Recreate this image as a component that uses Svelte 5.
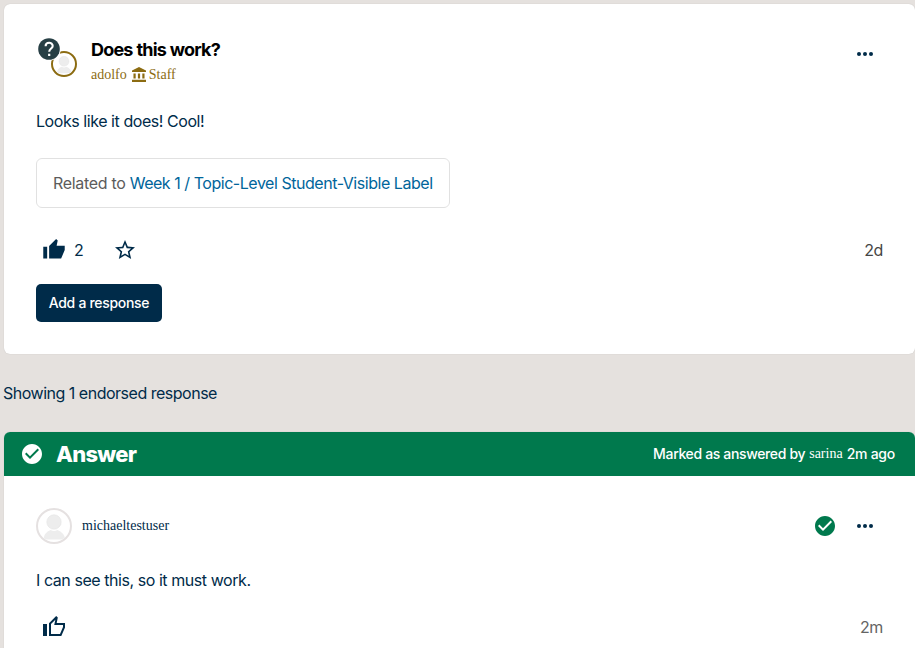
<script>
  const dots = [5, 11, 17];
</script>

{#snippet more()}
  <svg class="more" viewBox="0 0 22 8" width="22" height="8">
    {#each dots as x}<circle cx={x} cy="4" r="2" fill="currentColor" />{/each}
  </svg>
{/snippet}

{#snippet person()}
  <svg viewBox="0 0 32 32"><circle cx="16" cy="12" r="7.2" fill="#ededed" stroke="#e4e4e4" stroke-width=".6" /><path d="M5.500 29.500Q6 22.500 12.500 20Q16 22 19.500 20Q26 22.500 27.500 29.500Z" fill="#ededed" /></svg>
{/snippet}

{#snippet check(size)}
  <svg width={size} height={size} viewBox="2 2 20 20"><path fill="currentColor" d="M12 2C6.48 2 2 6.48 2 12s4.48 10 10 10 10-4.48 10-10S17.52 2 12 2zm-2 15-5-5 1.41-1.41L10 14.17l7.59-7.59L19 8l-9 9z" /></svg>
{/snippet}

<main>
  <article class="card post">
    <header>
      <div class="icons">
        <span class="avatar small">{@render person()}</span>
        <svg class="question" viewBox="0 0 24 24" width="24" height="24">
          <circle cx="12" cy="12" r="11.8" fill="#fff" />
          <circle cx="12" cy="12" r="10.8" fill="#273f45" />
          <path d="M8.600 9.300C8.600 4.600 15.700 4.800 15.700 9C15.700 11.500 12.200 11.600 12.200 14.800" fill="none" stroke="#fff" stroke-width="2.100" />
          <path d="M11.100 16.700h2.200v2.200h-2.200z" fill="#fff" />
        </svg>
      </div>
      <div class="heading">
        <h1>Does this work?</h1>
        <div class="author">
          <span class="name">adolfo</span>
          <svg width="14" height="15" viewBox="2 1 19 21" preserveAspectRatio="none"><path fill="currentColor" d="M4 10v7h3v-7H4zm6 0v7h3v-7h-3zM2 22h19v-3H2v3zm14-12v7h3v-7h-3zm-4.500-9L2 6v2h19V6l-9.500-5z" /></svg>
          <span class="role">Staff</span>
        </div>
      </div>
      {@render more()}
    </header>
    <p class="body">Looks like it does! Cool!</p>
    <div class="related"><span class="rel">Related to</span><a href="#topic">Week 1 / Topic-Level Student-Visible Label</a></div>
    <div class="actions">
      <svg class="thumb" width="24" height="24" viewBox="-.3 0 24.600 24.600"><path fill="currentColor" d="M1 9h4v12H1V9zm22-1h-8.310l1.120-5.380L14.170 1 7 8.180V21h12.310L23 12.400V8z" /></svg>
      <span class="count">2</span>
      <svg class="star" width="24" height="24" viewBox="0 0 24 24"><path fill="currentColor" d="M22 9.240l-7.190-.62L12 2 9.190 8.630 2 9.240l5.460 4.730L5.820 21 12 17.270 18.180 21l-1.630-7.030L22 9.240zM12 15.400l-3.760 2.270 1-4.280-3.320-2.880 4.380-.38L12 6.100l1.710 4.040 4.380.38-3.320 2.880 1 4.280L12 15.400z" /></svg>
      <time>2d</time>
    </div>
    <button>Add a response</button>
  </article>

  <p class="showing">Showing 1 endorsed response</p>

  <article class="card answer">
    <div class="banner">
      {@render check(20)}
      <h2>Answer</h2>
      <div class="marked"><span class="by">Marked as answered by</span><span class="who">sarina</span><span class="ago">2m ago</span></div>
    </div>
    <div class="reply">
      <header>
        <span class="avatar large">{@render person()}</span>
        <span class="user">michaeltestuser</span>
        <span class="endorsed">{@render check(20)}</span>
        {@render more()}
      </header>
      <p class="body">I can see this, so it must work.</p>
      <div class="actions">
        <svg class="thumb" width="24" height="24" viewBox="0 0 24 24"><path fill="currentColor" d="M23 8h-8.310l1.120-5.380L14.170 1 7 8.180V21h12.310L23 12.400V8zm-2 4l-3 7H9V9l4.340-4.340L12.230 10H21v2zM1 9h4v12H1V9z" /></svg>
        <time>2m</time>
      </div>
    </div>
  </article>
</main>

<style>
  :global(body) { background: #e5e1de; overflow: hidden; }
  main { box-sizing: border-box; height: 648px; padding: 4px 0 0 4px; overflow: hidden; font: 16px/24px Inter, sans-serif; color: #002b49; }
  h1, h2, p { margin: 0; }
  svg { display: block; flex: none; }
  .card { box-sizing: border-box; background: #fff; border-radius: 6px; box-shadow: 0 0 1px #0003; overflow: hidden; }
  .post { height: 350px; padding: 32px; }
  header { display: flex; }
  .post header { height: 48px; }
  .icons { position: relative; width: 55px; flex: none; }
  .avatar { box-sizing: border-box; display: block; border-radius: 50%; overflow: hidden; background: #fff; }
  .avatar svg { width: 100%; height: 100%; }
  .small { position: absolute; left: 15px; top: 15px; width: 26px; height: 26px; border: 2px solid #8c6c12; }
  .question { position: absolute; left: 1px; top: 1px; }
  h1 { font-size: 18px; line-height: 24px; font-weight: 700; color: #000; letter-spacing: -.8px; word-spacing: .3px; margin-top: 2px; white-space: nowrap; }
  .author { display: flex; align-items: center; height: 24px; margin-top: 1px; color: #8c6c12; font: 14px/24px "Liberation Serif", serif; }
  .author svg { margin: -2px 3px 0 5px; }
  .more { margin: 14px 7px 0 auto; }
  .post .body { margin-top: 25px; }
  .body { white-space: nowrap; letter-spacing: -.44px; }
  .showing { letter-spacing: -.49px; }
  .related { box-sizing: border-box; width: 414px; height: 50px; margin-top: 25px; padding: 12px 16px; border: 1px solid #e1e1e1; border-radius: 6px; display: flex; gap: 4px; white-space: nowrap; color: #5c5c5c; letter-spacing: -.46px; }
  .rel { letter-spacing: -.3px; }
  a { color: #00659b; text-decoration: none; }
  .actions { display: flex; align-items: center; height: 24px; padding-left: 6px; }
  .post .actions { margin-top: 30px; }
  .count { width: 10px; margin-left: 8px; letter-spacing: -.5px; }
  .star { margin-left: 29px; }
  time { margin-left: auto; color: #454545; letter-spacing: -.4px; }
  button { display: block; width: 126px; height: 38px; margin-top: 22px; padding: 0; border: 0; border-radius: 5px; background: #002b49; color: #fff; font: 500 14px/20px Inter, sans-serif; letter-spacing: -.3px; }
  .showing { margin: 27px 0 0 -1px; height: 24px; }
  .answer { margin-top: 27px; height: 260px; }
  .banner { display: flex; align-items: center; height: 44px; padding: 0 20px 0 18px; background: #00794d; color: #fff; }
  h2 { margin-left: 14px; font-size: 22px; line-height: 28px; font-weight: 800; letter-spacing: -.75px; }
  .marked { margin-left: auto; display: flex; gap: 4px; font-size: 14px; font-weight: 500; white-space: nowrap; letter-spacing: -.35px; }
  .ago { letter-spacing: -.25px; }
  .who { font-family: "Liberation Serif", serif; letter-spacing: 0; }
  .reply { padding: 32px 32px 0; }
  .reply header { height: 36px; align-items: center; }
  .reply .more { margin: 0 7px 0 19px; }
  .large { width: 36px; height: 36px; border: 2px solid #e5e1e1; }
  .user { margin-left: 10px; font: 14px/20px "Liberation Serif", serif; }
  .endorsed { margin-left: auto; color: #00794d; }
  .reply .body { margin-top: 24px; }
  .reply .actions { margin-top: 23px; }
  .reply time { color: #646464; }
</style>
